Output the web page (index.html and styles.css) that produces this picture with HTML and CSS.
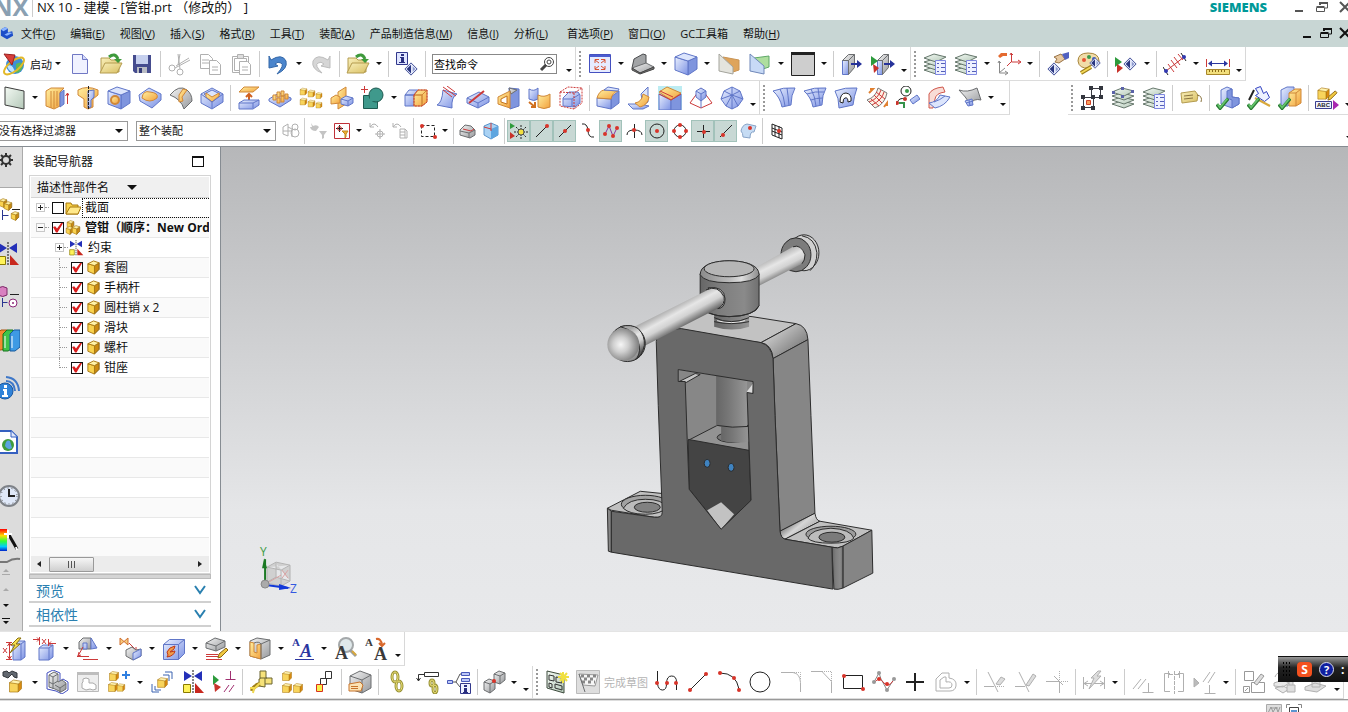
FILE: index.html
```html
<!DOCTYPE html>
<html lang="zh-CN">

<head>
  <meta charset="UTF-8">
  <meta name="viewport" content="width=device-width, initial-scale=1.0">
  <title>NX 10 - 建模</title>
  <link rel="stylesheet" href="styles.css">
</head>

<body>
  <!-- Shared gradients and symbols -->
  <svg class="defs" width="0" height="0" aria-hidden="true">
    <defs>
      <linearGradient id="blue" x1="0" y1="0" x2="1" y2="1"><stop offset="0" stop-color="#eaf0fe"/><stop offset="1" stop-color="#7c92e4"/></linearGradient>
      <linearGradient id="gold" x1="0" y1="0" x2="1" y2="1"><stop offset="0" stop-color="#fff0a0"/><stop offset="1" stop-color="#f2a03c"/></linearGradient>
      <linearGradient id="cream" x1="0" y1="0" x2="1" y2="1"><stop offset="0" stop-color="#f8efba"/><stop offset="1" stop-color="#d9bf62"/></linearGradient>
      <linearGradient id="gray" x1="0" y1="0" x2="1" y2="1"><stop offset="0" stop-color="#f4f4f4"/><stop offset="1" stop-color="#97999c"/></linearGradient>
      <linearGradient id="sheet" x1="0" y1="0" x2="1" y2="1"><stop offset="0" stop-color="#f4faf4"/><stop offset="1" stop-color="#b4c8b8"/></linearGradient>
      <linearGradient id="rainbow" x1="0" y1="0" x2="0" y2="1"><stop offset="0" stop-color="#f00"/><stop offset=".3" stop-color="#fd0"/><stop offset=".55" stop-color="#3f3"/><stop offset=".8" stop-color="#0cf"/><stop offset="1" stop-color="#02c"/></linearGradient>
      <symbol id="cube" viewBox="0 0 24 24"><path fill="#d98a10" stroke="#a8740c" d="M16 9l5-4v11l-5 5z"/><path fill="#f8d45c" stroke="#a8740c" d="M3 7h13v14H3z"/><path fill="#fff3b0" stroke="#a8740c" d="M3 7l6-4 12 2-5 4z"/></symbol>
      <symbol id="part" viewBox="0 0 16 16"><path fill="#c98a12" stroke="#7d5a0c" d="M9 6l5-3v7l-5 5z"/><path fill="#f9d24f" stroke="#a9780f" d="M2 4l7 2v9l-7-3z"/><path fill="#fff2a8" stroke="#a9780f" d="M2 4l6-3 6 2-5 3z"/></symbol>
      <symbol id="bluecube" viewBox="0 0 24 24"><path class="bld" d="M14 9l9-4v12l-9 6z"/><path class="bl" d="M1 5l13 4v14L1 18z"/><path class="blt" d="M1 5l9-4 13 4-9 4z"/></symbol>
      <symbol id="layers" viewBox="0 0 24 24"><g fill="url(#sheet)" stroke="#66776c"><path d="M1 18l10-3 12 3-10 4z"/><path d="M1 14l10-3 12 3-10 4z"/><path d="M1 10l10-3 12 3-10 4z"/><path d="M1 6l10-4 12 3-10 5z"/></g></symbol>
      <symbol id="list" viewBox="0 0 24 24"><path fill="#eef1ff" stroke="#7f88e0" d="M12.500 8.500h10v14h-10z"/><path fill="none" stroke="#5560b8" d="M14 11.500h2m2 0h4m-8 4h2m2 0h4m-8 4h2m2 0h4"/></symbol>
      <symbol id="diamond" viewBox="0 0 16 16"><path fill="#e4e9fa" stroke="#2c3a8c" d="M1 8l7-7 7 7-7 7z"/><path fill="#2a3680" d="M8 3v10L3 8z"/><path fill="#8e9bd0" d="M10 5v6l3-3z"/></symbol>
      <symbol id="folder" viewBox="0 0 24 24"><path class="cr" d="M2 6h8l2 2h8v12H2z"/><path class="cr" d="M1 21l5-10h17l-5 10z"/><path fill="none" stroke="#3f9a3c" stroke-width="3" d="M10 5q6-5 9 2"/><path fill="#3f9a3c" d="M15 7h8l-4 4z"/></symbol>
      <symbol id="tick" viewBox="0 0 16 16"><path fill="none" stroke="#2a7c35" stroke-width="4" d="M1 9l4 5L15 2"/><path fill="none" stroke="#63c46a" stroke-width="2" d="M2 9l3 4 9-11"/></symbol>
      <symbol id="spot" viewBox="0 0 4 4"><circle cx="2" cy="2" r="2" fill="#d8342a"/></symbol>
      <symbol id="pencil" viewBox="0 0 12 12"><path fill="#f0c840" stroke="#8a6410" d="M1 11l1-4 7-6 2 2-7 7z"/></symbol>
      <symbol id="window-restore" viewBox="0 0 12 12"><path fill="none" stroke="currentColor" stroke-width="2" d="M4 4V2h8"/><path fill="none" stroke="currentColor" d="M11.500 2v5H9"/><path fill="none" stroke="currentColor" d="M.5 6.500h8v4h-8zM.5 5.500h8"/></symbol>
      <symbol id="mirror" viewBox="0 0 24 24"><path fill="#2430b8" d="M3 1l8 5-8 5zM21 1l-8 5 8 5z"/><path fill="none" stroke="#111" stroke-dasharray="2 1" d="M12 0v24"/><path fill="#fff35a" stroke="#8a7a00" d="M2.500 14.500h7v8h-7z"/><path fill="#c8281e" d="M14 13v10h9z"/></symbol>
    </defs>
  </svg>

  <header class="titlebar">
    <span class="logo">NX</span>
    <h1 class="title">NX 10 - 建模 - [管钳.prt （修改的） ]</h1>
    <span class="brand">SIEMENS</span>
    <div class="window-buttons">
      <button class="win" aria-label="最小化"><svg viewBox="0 0 12 12"><path class="w2" d="M2 10h8"/></svg></button>
      <button class="win" aria-label="还原"><svg viewBox="0 0 12 12"><use href="#window-restore"/></svg></button>
      <button class="win" aria-label="关闭"><svg viewBox="0 0 12 12"><path class="w2" d="M1 1l10 10M11 1L1 11"/></svg></button>
    </div>
  </header>

  <nav class="menubar">
    <svg class="menu-icon" viewBox="0 0 16 16"><path fill="#1c4ec8" d="M1 4l5-3 3 2v4l5-1 1 5-7 4-7-4z"/><path fill="#8ab4ff" d="M1 4l5-3 3 2-5 3zM5 10l5-3 4 1-6 3z"/></svg>
    <button>文件(<u>F</u>)</button>
    <button>编辑(<u>E</u>)</button>
    <button>视图(<u>V</u>)</button>
    <button>插入(<u>S</u>)</button>
    <button>格式(<u>R</u>)</button>
    <button>工具(<u>T</u>)</button>
    <button>装配(<u>A</u>)</button>
    <button>产品制造信息(<u>M</u>)</button>
    <button>信息(<u>I</u>)</button>
    <button class="wide">分析(<u>L</u>)</button>
    <button>首选项(<u>P</u>)</button>
    <button>窗口(<u>O</u>)</button>
    <button>GC工具箱</button>
    <button>帮助(<u>H</u>)</button>
    <div class="window-buttons dark">
      <button class="win" aria-label="最小化"><svg viewBox="0 0 12 12"><path class="w2" d="M2 10h8"/></svg></button>
      <button class="win" aria-label="还原"><svg viewBox="0 0 12 12"><use href="#window-restore"/></svg></button>
      <button class="win" aria-label="关闭"><svg viewBox="0 0 12 12"><path class="w2" d="M1 1l10 10M11 1L1 11"/></svg></button>
    </div>
  </nav>

  <!-- Standard, view and utility toolbars -->
  <div class="toolbar-row">
    <div class="toolbar first">
      <button class="start"><svg viewBox="0 0 24 24"><circle cx="13" cy="13" r="9" fill="#3d8fd8"/><path fill="#5cb85a" d="M14 12q6-4 7 2-2 7-7 7z"/><path fill="#bfe3ff" d="M5 14q6-3 8 7-6-1-8-7z"/><ellipse cx="12" cy="14" rx="12" ry="5" fill="none" stroke="#e3b92a" stroke-width="2" transform="rotate(-38 12 14)"/><path fill="#d8403a" stroke="#9a2020" d="M2 2l11 1-3 10z"/></svg>启动</button>
      <button class="drop" aria-label="启动选项"></button>
      <button class="tool" aria-label="新建"><svg viewBox="0 0 24 24"><path fill="#f0f2ff" stroke="#7078c4" d="M4.500 2.500h10l5 5v14h-15z"/><path fill="#d4d9fb" stroke="#7078c4" d="M14.500 2.500v5h5"/></svg></button>
      <button class="tool" aria-label="打开"><svg viewBox="0 0 24 24"><use href="#folder"/></svg></button>
      <button class="tool" aria-label="保存"><svg viewBox="0 0 24 24"><path fill="#454c8e" d="M3 3h18v18H5l-2-2z"/><path fill="#c6d0ee" d="M6 3h12v9H6z"/><path fill="#b9bcc4" d="M7 15h10v6H7z"/><path fill="#343b78" d="M9 16h3v5H9z"/></svg></button>
      <span class="sep"></span>
      <button class="tool" aria-label="剪切"><svg class="off" viewBox="0 0 24 24"><path d="M11 2l2 15M13 2l-2 11M23 8L8 16M22 6L9 14"/><circle cx="5" cy="16" r="3"/><circle cx="13" cy="20" r="3"/></svg></button>
      <button class="tool" aria-label="复制"><svg class="off" viewBox="0 0 24 24"><path d="M2.500 2.500h8l4 4v10h-12zM4 8h7m-7 3h7"/><path fill="#fff" d="M11.500 8.500h7l4 4v10h-11zM14 15h6m-6 3h6"/></svg></button>
      <button class="tool" aria-label="粘贴"><svg class="off" viewBox="0 0 24 24"><path d="M3.500 4.500h16v16h-16zM5.500 6.500h12v12h-12z"/><path fill="#ddd" d="M8.500 2.500h6v4h-6z"/><path fill="#fff" d="M10.500 9.500h8l3 3v10h-11zM13 15h6m-6 3h6"/></svg></button>
      <span class="sep"></span>
      <button class="tool" aria-label="撤消"><svg viewBox="0 0 24 24"><path fill="#4b85cc" stroke="#3568a8" d="M3 4l2 4q11-7 15 1 2 8-9 13 8-9 4-11-3-2-6 1l3 2-9 2z"/></svg></button>
      <button class="drop" aria-label="撤消列表"></button>
      <button class="tool" aria-label="重做"><svg viewBox="0 0 24 24"><path fill="#d6d6d6" stroke="#bdbdbd" d="M21 4l-2 4Q8 1 4 9q-2 8 9 12-8-8-4-10 3-2 6 1l-3 2 9 2z"/></svg></button>
      <span class="sep"></span>
      <button class="tool" aria-label="最近打开"><svg viewBox="0 0 24 24"><use href="#folder"/></svg></button>
      <button class="drop" aria-label="最近打开列表"></button>
      <span class="sep"></span>
      <button class="tool" aria-label="命令信息"><svg viewBox="0 0 24 24"><path fill="#dfe5ff" stroke="#32388c" d="M1.500.5h11v12h-11z"/><path fill="#2a2f80" d="M6 2h3v2H6zM5 5h4v5h1v1H4v-1h2V6H5z"/><use href="#diamond" x="9" y="10" width="14" height="14"/></svg></button>
      <span class="sep"></span>
      <label class="finder"><input type="text" value="查找命令" aria-label="查找命令"><svg viewBox="0 0 16 16"><circle cx="10" cy="6" r="4.500"/><circle cx="10" cy="6" r="2"/><path d="M7 9l-5 5" stroke-width="3"/></svg></label>
      <button class="drop more" aria-label="更多"></button>
    </div>
    <div class="toolbar">
      <span class="grip"></span>
      <button class="tool" aria-label="适合窗口"><svg viewBox="0 0 24 24"><path fill="#e6ebff" stroke="#4450c0" d="M1.500 2.500h21v18h-21z"/><path fill="#4b5cd0" d="M2 3h20v2H2z"/><path fill="none" stroke="#d85232" d="M7 11V7.500h4M7 8l4 3m2-3.500h4V11m0-3l-4 3m-6 3v3.500h4M7 17l4-3m2 3.500h4V14m0 3l-4-3"/></svg></button>
      <button class="drop" aria-label="视图选项"></button>
      <button class="tool" aria-label="渲染样式"><svg viewBox="0 0 24 24"><path fill="#a2a4a6" stroke="#4a4c4e" d="M1 16l2-9 9-5 3 1v9L4 17z"/><path class="gy" d="M1 16l14-5 8 4-14 6z"/><path fill="#777" stroke="#444" d="M1 16l8 5 14-6v2L9 22l-8-4z"/></svg></button>
      <button class="drop" aria-label="渲染选项"></button>
      <button class="tool" aria-label="定向视图"><svg viewBox="0 0 24 24"><use href="#bluecube"/></svg></button>
      <button class="drop" aria-label="定向选项"></button>
      <button class="tool" aria-label="编辑截面"><svg viewBox="0 0 24 24"><path fill="#dea45c" stroke="#c99454" d="M6 5l16 3v10l-9 3z"/><path fill="#e4e4de" stroke="#a4a49c" d="M2 2l14 13v7L2 19z"/></svg></button>
      <button class="tool" aria-label="剪切截面"><svg viewBox="0 0 24 24"><path fill="#aede9e" stroke="#5fa868" d="M6 6l15-2v11l-9 3z"/><path fill="#c8daf6" stroke="#6f87b8" d="M2 2l14 12v8L2 19z"/></svg></button>
      <button class="drop" aria-label="截面选项"></button>
      <button class="tool" aria-label="背景"><svg viewBox="0 0 24 24"><path fill="#cecece" stroke="#222" d="M.5.5h23v23H.5z"/><path fill="#222" d="M0 0h24v3H0z"/></svg></button>
      <button class="drop" aria-label="背景选项"></button>
      <span class="sep"></span>
      <button class="tool" aria-label="移动面"><svg viewBox="0 0 24 24"><path class="bl" d="M2.500 8.500h6v14h-6z"/><path class="gy" d="M2.500 8.500l6-6h6l-6 6zM8.500 8.500l6-6v13l-6 7z"/><path fill="none" stroke="#26329a" stroke-width="2" d="M11 12h9"/><path fill="#26329a" d="M17 8l5 4-5 4z"/></svg></button>
      <button class="tool" aria-label="替换面"><svg viewBox="0 0 24 24"><path class="bl" d="M6.500 8.500h5v14h-5z"/><path class="gy" d="M6.500 8.500l6-6h5l-6 6zM11.500 8.500l6-6v13l-6 7z"/><path fill="none" stroke="#26329a" stroke-width="2" d="M13 12h8"/><path fill="#26329a" d="M19 8l5 4-5 4z"/><path fill="#2d9b3c" d="M0 4l7 5-7 5z"/><path fill="#c8322a" d="M2 12l6 4-5 5z"/></svg></button>
      <button class="drop more" aria-label="更多"></button>
    </div>
    <div class="toolbar">
      <span class="grip"></span>
      <button class="tool" aria-label="图层设置"><svg viewBox="0 0 24 24"><use href="#layers"/><use href="#list"/></svg></button>
      <button class="tool" aria-label="图层类别"><svg viewBox="0 0 24 24"><use href="#layers"/><use href="#list"/></svg></button>
      <button class="drop" aria-label="图层选项"></button>
      <button class="tool" aria-label="WCS 定向"><svg viewBox="0 0 24 24"><path class="rd" d="M14.500 1v9h9M14 10l-4 4m3-11l1-2 2 2m5 5l3 2-3 2"/><path fill="none" stroke="#888" d="M2.500 9v12h8M2 21l6-5M1 11l1-2 2 2m4 8l3 2-3 2"/><path fill="#e46a30" d="M1 4l3-3h6v3H6L3 6z"/></svg></button>
      <button class="drop" aria-label="WCS 选项"></button>
      <span class="sep"></span>
      <button class="tool" aria-label="显示命令"><svg viewBox="0 0 24 24"><use href="#diamond" x="1" y="10" width="14" height="14"/><path fill="#e8c9a0" stroke="#9a7448" d="M8 5l7-3 4 5-6 4-4-1 2-3z"/><path fill="#5160c0" d="M16 2l7-2v6l-4 2z"/></svg></button>
      <button class="tool" aria-label="编辑对象显示"><svg viewBox="0 0 24 24"><path fill="#f0dca8" stroke="#a8853c" d="M1 9Q1 1 11 1q11 0 11 8 0 6-6 4-4 0-4 3-10 1-11-7z"/><circle cx="7" cy="8" r="2" fill="#e65434"/><circle cx="12" cy="5" r="2" fill="#3c9a4a"/><circle cx="17" cy="7" r="2" fill="#3b5fc8"/><use href="#diamond" x="12" y="5" width="12" height="12"/><path fill="none" stroke="#9a7a18" stroke-width="4" d="M4 21l10-6"/><path fill="none" stroke="#f3d957" stroke-width="2" d="M4 21l10-6"/></svg></button>
      <span class="sep"></span>
      <button class="tool" aria-label="显示和隐藏"><svg viewBox="0 0 24 24"><path fill="#2d9b3c" d="M1 5l7 5-7 5z"/><path fill="#c8322a" d="M3 12l6 4-6 5z"/><use href="#diamond" x="9" y="5" width="14" height="14"/></svg></button>
      <button class="drop" aria-label="显示选项"></button>
      <span class="sep"></span>
      <button class="tool" aria-label="简单距离"><svg viewBox="0 0 24 24"><path class="rd" d="M5 12l6 8m-3-12l6 8m-3-11l6 8m-2-11l5 6"/><path fill="none" stroke="#c53030" d="M3 19L21 5"/><path class="ln" d="M0 15l5 8M18 1l5 8"/><circle cx="3" cy="19" r="2" fill="#3038b0"/><circle cx="21" cy="5" r="2" fill="#3038b0"/></svg></button>
      <button class="drop" aria-label="测量选项"></button>
      <button class="tool" aria-label="测量距离"><svg viewBox="0 0 24 24"><path fill="none" stroke="#2a36a0" d="M3 11.500h18"/><path fill="#2a36a0" d="M2 11.500l4-3v6zM22 11.500l-4-3v6z"/><path class="rd" d="M.5 7v8M23.500 7v8"/><path fill="#f2df7c" stroke="#a8862a" d="M.5 17.500h23v5H.5z"/><path fill="none" stroke="#8b6c18" d="M3.500 18v2m3-2v2m3-2v2m3-2v2m3-2v2m3-2v2"/></svg></button>
      <button class="drop more" aria-label="更多"></button>
    </div>
  </div>

  <!-- Feature, surface and assembly toolbars -->
  <div class="toolbar-row">
    <div class="toolbar first">
      <button class="tool" aria-label="草图"><svg viewBox="0 0 24 24"><path fill="url(#sheet)" stroke="#3c3c3c" d="M3 1l19 4v18L3 19z"/></svg></button>
      <button class="drop" aria-label="草图选项"></button>
      <button class="tool" aria-label="拉伸"><svg viewBox="0 0 24 24"><path class="or" d="M1 5l5-3h13l-4 4v14l-6 3-8-3z"/><path class="lo" d="M6 5v17m3-17v17m3-17v15"/><path class="bld" d="M15 7l4-3v14l-4 3z"/><path class="rd" d="M22.500 18V7m-2 3l2-3 2 3"/></svg></button>
      <button class="tool" aria-label="旋转"><svg viewBox="0 0 24 24"><path class="or" d="M2 4q9-5 20 0v5l-5 4v8l-5 2-4-2v-8L2 9z"/><path class="bl" d="M12 5l6-1v7l-3 3v7l-3 1z"/><path class="ln" stroke-dasharray="3 1" d="M12.500 0v24"/></svg></button>
      <button class="tool" aria-label="孔"><svg viewBox="0 0 24 24"><use href="#bluecube"/><circle cx="8" cy="14" r="4" class="or" stroke-width="2"/></svg></button>
      <button class="tool" aria-label="凸起"><svg viewBox="0 0 24 24"><path class="bl" d="M1 9l10-7 12 6v6l-9 8L2 15z"/><path class="or" d="M4 12q1-8 8-6 9 1 7 6-7 6-15 0z"/></svg></button>
      <button class="tool" aria-label="槽"><svg viewBox="0 0 24 24"><path class="gy" d="M1 9Q10-2 18 4q5 4 5 11l-8 8Q12 13 1 9z"/><path class="or" d="M10 9l4-6 4 1-5 7 1 4-4 1z"/></svg></button>
      <button class="tool" aria-label="腔"><svg viewBox="0 0 24 24"><path class="bl" d="M1 8l11-6 11 6v8l-11 7-11-6z"/><path class="blt" d="M4 8l8-4 8 4-8 6z"/><path class="or" d="M6 7l6 4 7-4v3l-7 6-6-5z"/><path class="lb" d="M1 8l11 8 11-8m-11 8v6"/></svg></button>
      <span class="sep"></span>
      <button class="tool" aria-label="偏置面"><svg viewBox="0 0 24 24"><path class="or" d="M2 6l5-5h15l-6 5z"/><path fill="none" stroke="#d06020" stroke-width="2" d="M12 15V9m-3 2l3-3 3 3"/><path class="bl" d="M2 17l5-3h15v5l-6 4H2z"/><path class="lb" d="M2 17h14l6-3m-6 3v5"/></svg></button>
      <button class="tool" aria-label="阵列面"><svg viewBox="0 0 24 24"><path class="bl" d="M1 13l10-6 12 5v2l-11 7L1 15z"/><g class="or"><path d="M5 9h3v5H5zM9 6h3v5H9zM13 5h3v5h-3zM9 12h3v5H9zM13 10h3v6h-3zM17 8h3v5h-3z"/></g></svg></button>
      <button class="tool" aria-label="阵列特征"><svg viewBox="0 0 24 24"><use href="#cube" x="0" y="0" width="9" height="11"/><use href="#cube" x="8" y="2" width="9" height="11"/><use href="#cube" x="16" y="4" width="8" height="11"/><use href="#cube" x="0" y="10" width="9" height="11"/><use href="#cube" x="8" y="12" width="9" height="11"/><use href="#cube" x="16" y="14" width="8" height="10"/></svg></button>
      <button class="tool" aria-label="镜像特征"><svg viewBox="0 0 24 24"><path class="or" d="M8 6l8-5v17l-8 5z"/><path class="or" d="M1 12l5-3 4 2v6l-9 1z"/><path class="bl" d="M11 13l5-3 7 2v5l-5 3-7-2z"/><path class="lb" d="M11 13l7 2 5-3m-5 3v5"/></svg></button>
      <button class="tool" aria-label="合并"><svg viewBox="0 0 24 24"><path class="tl" d="M2.500 9.500h14v13h-14z"/><circle class="tl" cx="15" cy="9" r="7"/><path fill="#3f998c" d="M9 10h7v5H9z"/><path class="rd" d="M0 3.500h7M3.500 0v7"/></svg></button>
      <button class="drop" aria-label="合并选项"></button>
      <button class="tool" aria-label="修剪体"><svg viewBox="0 0 24 24"><path class="bl" d="M1 9h9v11H1zM1 9l4-5h9l-4 5z"/><path class="or" d="M10 9h8v11h-8zM10 9l4-5h9l-5 5zM18 9l5-5v12l-5 4z"/><path class="rd" stroke-dasharray="2 1" d="M10 9l4-5h9v12l-5 4h-8z"/></svg></button>
      <button class="tool" aria-label="拆分体"><svg viewBox="0 0 24 24"><path class="bl" d="M8 4l14 4q-6 3-5 14L2 19q5-2 6-15z"/><path class="rd" d="M8 1l13 9M12 0l8 6M8 4l9 7"/></svg></button>
      <button class="tool" aria-label="抽壳"><svg viewBox="0 0 24 24"><path class="bl" d="M1 12l12-6 10 5v5l-11 6-11-5z"/><path class="lb" d="M1 12l11 5 11-6m-11 6v5"/><path class="rd" stroke-width="2" d="M3 17L18 5"/></svg></button>
      <button class="tool" aria-label="加厚"><svg viewBox="0 0 24 24"><path class="bld" d="M12 2l10 1v17l-9 3z"/><path class="gy" d="M12 2l8 2-6 4z"/><path class="or" d="M1 11l12-6v17L1 18z"/><path fill="#fff" stroke="#c4731e" d="M4 13l6-3v8l-6-2z"/></svg></button>
      <button class="tool" aria-label="缝合"><svg viewBox="0 0 24 24"><path class="bl" d="M1 3q5 3 9-1v11q-4 3-9 0z"/><path class="or" d="M10 9q6 3 12-1v13q-6 3-12 0z"/><path fill="none" stroke="#d07020" stroke-width="2" d="M1 16l6 5m0-5v5H3"/></svg></button>
      <button class="tool" aria-label="包容体"><svg viewBox="0 0 24 24"><path class="bl" d="M4 20v-8l6-6h9l2 3v8l-5 4z"/><path class="lb" d="M4 13h9l8-5m-8 5v7"/><path class="rd" stroke-dasharray="2 1" d="M1 6l8-5 14 1v15l-8 6-14-3zM1 6l14 1 8-5m-8 5v16"/></svg></button>
      <span class="sep"></span>
      <button class="tool" aria-label="边倒圆"><svg viewBox="0 0 24 24"><path class="bld" d="M15 11l8-6v12l-8 6z"/><path class="bl" d="M1 12l14 1v10L1 20z"/><path class="or" d="M1 12q2-7 7-8l14 1q-6 2-7 8z"/><path class="blt" d="M8 4l4-3 11 2-1 2z"/></svg></button>
      <button class="tool" aria-label="面倒圆"><svg viewBox="0 0 24 24"><path class="bl" d="M1 18h12l9 2-6 3H6z"/><path class="blt" d="M14 8l7-7v15l-5 3z"/><path class="or" d="M8 17q7-1 8-9l6 3q-1 8-9 10z"/></svg></button>
      <button class="tool" aria-label="倒斜角"><svg viewBox="0 0 24 24"><path fill="#bcecf2" d="M0 0h24v24H0z"/><path class="bl" d="M1 8l12 6v10H1z"/><path class="bld" d="M13 14l10-6v16H13z"/><path class="or" d="M1 6l8-5 14 6-10 7z"/><path class="rd" d="M1 8l12 6 10-6M2 5l13 6"/></svg></button>
      <button class="tool" aria-label="拔模"><svg viewBox="0 0 24 24"><path class="rd" d="M1 17L12 2l11 15-11 5z"/><path class="bl" d="M7 5l5-3 5 3v6l-5 4-5-4z"/><path class="lb" d="M7 5l5 3 5-3m-5 3v14"/></svg></button>
      <button class="tool" aria-label="体"><svg viewBox="0 0 24 24"><path class="bl" d="M12 1l8 4 3 8-5 7-6 3-6-3-5-7 3-8z"/><path class="lb" d="M4 5l8 4 8-4M1 13l11-4 11 4M6 20l6-11 6 11M12 1v22"/></svg></button>
      <button class="drop more" aria-label="更多"></button>
    </div>
    <div class="toolbar">
      <span class="grip"></span>
      <button class="tool" aria-label="直纹"><svg viewBox="0 0 24 24"><path class="bl" d="M1 5q10-4 22-3-4 7-4 17l-9 2Q8 11 1 5z"/><path class="lb" d="M8 3q4 7 5 17m2-18q1 7 2 17"/></svg></button>
      <button class="tool" aria-label="通过曲线网格"><svg viewBox="0 0 24 24"><path class="bl" d="M1 5q10-4 22-3-4 7-4 17l-9 2Q8 11 1 5z"/><path class="lb" d="M8 3q4 7 5 17m2-18q1 7 2 17M4 8q8-3 17-2M8 14q5-2 12-2"/></svg></button>
      <button class="tool" aria-label="N 边曲面"><svg viewBox="0 0 24 24"><path class="bl" d="M1 5q10-4 22-3-3 8-4 17l-14 3Q5 12 1 5z"/><path fill="#fff" stroke="#222" d="M6 16q0-9 6-9 6 1 5 8l-3 1q0-5-3-4-2 0-2 5z"/></svg></button>
      <button class="tool" aria-label="扫掠"><svg viewBox="0 0 24 24"><path fill="#fdf0e4" stroke="#7c7c7c" d="M2 14Q11 11 13 2l9 5Q20 18 10 22z"/><path class="rd" d="M4 16q9-3 12-12M7 19q10-5 12-13M6 13l8 7M9 9l8 8M11 6l9 7"/><path fill="none" stroke="#e08030" stroke-width="2" d="M4 7l4-4H5m14 18l3-4v3"/></svg></button>
      <button class="tool" aria-label="曲线偏置"><svg viewBox="0 0 24 24"><circle class="ln" cx="10" cy="5" r="5"/><path class="ln" d="M1 17q2-6 8-4"/><circle cx="11" cy="5" r="2" fill="#3a9a48"/><circle cx="1" cy="17" r="2" fill="#c8322a"/><circle cx="9" cy="13" r="2" fill="#c8322a"/><path class="bl" d="M14 14l7-5 3 4-7 5z"/><path fill="none" stroke="#36914a" stroke-width="2" d="M8 22v-5H3"/></svg></button>
      <button class="tool" aria-label="桥接"><svg viewBox="0 0 24 24"><path fill="#f8dcd6" stroke="#d0584c" d="M2 8q3-6 14-7l2 5Q9 7 8 13L6 22H2z"/><path class="blt" d="M2 17q8-1 11-8l10 2q-5 9-15 11z"/><path class="lb" d="M7 16q6-2 11-6"/></svg></button>
      <button class="tool" aria-label="片体"><svg viewBox="0 0 24 24"><path class="gy" d="M1 4q8 3 18-2l4 12q-7-2-11 4Q8 11 1 4z"/><path class="bl" d="M7 15l7-2 1 6-5 1z"/><path class="lb" d="M8 17l7-2m-4-1l1 6"/></svg></button>
      <button class="drop" aria-label="曲面选项"></button>
      <button class="drop more" aria-label="更多"></button>
    </div>
    <div class="toolbar aside">
      <span class="grip"></span>
      <button class="tool" aria-label="包容块"><svg viewBox="0 0 24 24"><path fill="none" stroke="#3c3c44" d="M11.500 2.500h9v9h-9zM3.500 11.500h10v10h-10z"/><path fill="#33363e" d="M9 0h4v4H9zM19 0h4v4h-4zM19 9h4v4h-4zM1 9h4v4H1zM11 9h4v4h-4zM1 20h4v4H1zM11 20h4v4h-4z"/><path fill="#f8a05c" stroke="#d04228" d="M6.500 14.500h4v4h-4z"/></svg></button>
      <button class="tool" aria-label="移动至图层"><svg viewBox="0 0 24 24"><use href="#layers"/><path fill="#5a62a8" d="M1 5h3v3H1zM20 4h3v3h-3zM10 1h3v3h-3zM10 9h3v3h-3z"/></svg></button>
      <button class="tool" aria-label="图层视图"><svg viewBox="0 0 24 24"><use href="#layers"/><use href="#list"/></svg></button>
      <span class="sep"></span>
      <button class="tool" aria-label="属性"><svg viewBox="0 0 24 24"><path class="cr" d="M2 7l14-2 3 4-1 6-15 2z"/><path fill="none" stroke="#8a7440" d="M5 10l9-1m-9 4l9-1m4-3q6 1 4 7"/></svg></button>
      <span class="sep"></span>
      <button class="tool" aria-label="检查部件"><svg viewBox="0 0 24 24"><path class="bl" d="M5 4l6-3 5 2v8l7 1v6l-7 4-11-4z"/><path class="bld" d="M11 5l5-2v8l7 1v6l-7 4v-8l-5-2z"/><use href="#tick" x="0" y="11" width="13" height="13"/></svg></button>
      <button class="tool" aria-label="检查草图"><svg viewBox="0 0 24 24"><path fill="#eef2ff" stroke="#3040c0" d="M8.500 2.500l5-2 3 7 3-2 3 6-5 4-9-6 3-2z"/><path fill="none" stroke="#222" stroke-width="2" d="M7 4L2 14"/><path fill="none" stroke="#d8a83c" stroke-width="2" d="M8 12l15 8"/><use href="#tick" x="0" y="11" width="13" height="13"/></svg></button>
      <button class="tool" aria-label="检查装配"><svg viewBox="0 0 24 24"><path class="bl" d="M3 4l6-3h7v12l-6 7H3z"/><path class="or" d="M11 7l6-4h6v14l-5 3h-7z"/><path class="lo" d="M11 7h7l5-4m-5 4v13"/><use href="#tick" x="0" y="11" width="13" height="13"/></svg></button>
      <span class="sep"></span>
      <button class="tool" aria-label="PMI 注释"><svg viewBox="0 0 24 24"><use href="#cube" x="1" y="0" width="15" height="15"/><use href="#pencil" x="12" y="4" width="11" height="11"/><path fill="#eef1ff" stroke="#3a3f90" d="M.5 15.500h16v7H.5z"/><text class="abc" x="2" y="21">ABC</text><path fill="#a828b0" d="M18 14l6 5-6 5z"/></svg></button>
      <button class="drop more" aria-label="更多"></button>
    </div>
  </div>

  <!-- Selection bar -->
  <div class="selection-bar">
    <label class="combo"><select aria-label="类型过滤器"><option>没有选择过滤器</option></select></label>
    <label class="combo scope"><select aria-label="选择范围"><option>整个装配</option></select></label>
    <button class="mini" aria-label="关联"><svg class="off" viewBox="0 0 18 18"><path d="M1 5l5-3v12l-5-2zM6 5l4 2v8M1 9h9"/><circle cx="13" cy="5" r="3"/><circle cx="13" cy="11" r="4"/></svg></button>
    <span class="sep"></span>
    <button class="mini" aria-label="重置过滤器"><svg viewBox="0 0 18 18"><path fill="#c4c4c4" d="M9 9h8l-3 4v3l-2 1v-4z"/><path fill="#c4c4c4" d="M1 1l2 3q4-2 6 1l-3 4q-5 0-6-4l2 0z"/></svg></button>
    <button class="mini" aria-label="常规选择过滤器"><svg viewBox="0 0 18 18"><path fill="#fff" stroke="#c03038" d="M1.500 1.500h15v15h-15z"/><path class="ln" d="M6.500 3v7M3 6.500h7"/><circle class="rd" cx="6.500" cy="6.500" r="2"/><path fill="#f0b030" stroke="#c08820" d="M9 9h6l-2 3v3l-1 1v-4z"/></svg></button>
    <button class="drop" aria-label="过滤选项"></button>
    <button class="mini" aria-label="取消选择"><svg class="off" viewBox="0 0 18 18"><path d="M2 5q4-6 8 0M2 1v4h4M7 12h10M12 7v10"/><circle cx="12" cy="12" r="3"/></svg></button>
    <button class="mini" aria-label="查找"><svg class="off" viewBox="0 0 18 18"><path d="M2 5q4-6 8 0M2 1v4h4M9 7h5v9H9zm5 0l2 2v7h-2M9 10h5m-5 3h5"/></svg></button>
    <span class="sep"></span>
    <button class="mini" aria-label="矩形选择"><svg viewBox="0 0 18 18"><path class="ln" stroke-dasharray="3 2" d="M2.500 3.500h13v11h-13z"/><use href="#spot" x="1" y="2" width="4" height="4"/><use href="#spot" x="14" y="13" width="4" height="4"/></svg></button>
    <button class="drop" aria-label="选择选项"></button>
    <span class="sep"></span>
    <button class="mini" aria-label="高亮隐藏边"><svg viewBox="0 0 18 18"><path class="gy" d="M1 13V8l5-5 6 1 4 4v5l-5 3z"/><path class="gl" d="M1 9l9 2 6-3m-6 3v5"/><path class="rd" d="M4 7l8 2 3-2"/></svg></button>
    <button class="mini" aria-label="实体"><svg viewBox="0 0 18 18"><path fill="#a9d2f4" stroke="#5a94cc" d="M2 4l7-3 7 3v9l-7 4-7-4z"/><path fill="#5fa6e0" d="M9 7l7-3v9l-7 4z"/><path class="rd" d="M2 5l7 2M9 1v8"/></svg></button>
    <span class="sep"></span>
    <button class="mini on" aria-label="启用捕捉点"><svg viewBox="0 0 18 18"><path fill="#2d9b3c" d="M0 1l5 3-5 3z"/><path fill="#c8322a" d="M0 10l5 4-5 3z"/><path class="ln" stroke-dasharray="2 1" d="M11 3v14M4 10h14M6 5l10 10M16 5L6 15"/><circle cx="11" cy="10" r="3" fill="#f2e040" stroke="#555"/></svg></button>
    <button class="mini on" aria-label="端点"><svg viewBox="0 0 18 18"><path class="ln" d="M3 15L14 4"/><use href="#spot" x="12" y="2" width="4" height="4"/></svg></button>
    <button class="mini on" aria-label="中点"><svg viewBox="0 0 18 18"><path class="ln" d="M3 15L15 3"/><use href="#spot" x="7" y="7" width="4" height="4"/></svg></button>
    <button class="mini" aria-label="控制点"><svg viewBox="0 0 18 18"><path class="ln" d="M3 2q5-1 6 6 0 8 6 7"/><use href="#spot" x="7" y="6" width="4" height="4"/></svg></button>
    <button class="mini on" aria-label="极点"><svg viewBox="0 0 18 18"><path fill="none" stroke="#8c2f9c" d="M3 12l4-8 4 10 4-8"/><use href="#spot" x="1" y="10" width="4" height="4"/><use href="#spot" x="5" y="2" width="4" height="4"/><use href="#spot" x="9" y="12" width="4" height="4"/><use href="#spot" x="13" y="4" width="4" height="4"/></svg></button>
    <button class="mini" aria-label="交点"><svg viewBox="0 0 18 18"><path class="ln" d="M9.500 2v14M2 13q0-5 7-5 8 0 8 5"/><use href="#spot" x="7" y="6" width="4" height="4"/></svg></button>
    <button class="mini on" aria-label="圆弧中心"><svg viewBox="0 0 18 18"><circle class="ln" cx="9" cy="9" r="7"/><use href="#spot" x="7" y="7" width="4" height="4"/></svg></button>
    <button class="mini" aria-label="象限点"><svg viewBox="0 0 18 18"><circle class="ln" cx="9" cy="9" r="6"/><use href="#spot" x="7" y="1" width="4" height="4"/><use href="#spot" x="1" y="7" width="4" height="4"/><use href="#spot" x="13" y="7" width="4" height="4"/><use href="#spot" x="7" y="13" width="4" height="4"/></svg></button>
    <button class="mini on" aria-label="现有点"><svg viewBox="0 0 18 18"><path class="ln" d="M9.500 3v13M3 9.500h13"/><use href="#spot" x="8" y="8" width="4" height="4"/></svg></button>
    <button class="mini on" aria-label="曲线上的点"><svg viewBox="0 0 18 18"><path class="ln" d="M3 15L15 3"/><use href="#spot" x="4" y="11" width="4" height="4"/></svg></button>
    <button class="mini" aria-label="面上的点"><svg viewBox="0 0 18 18"><path fill="#c6dcf4" stroke="#88a4c8" d="M1 9q1-6 6-7l9 2-2 6q-4-1-4 6l-7-1q0-4-2-6z"/><use href="#spot" x="8" y="4" width="4" height="4"/></svg></button>
    <span class="sep"></span>
    <button class="mini" aria-label="有界栅格"><svg viewBox="0 0 18 18"><path class="ln" d="M4 2l10 4v11L4 13zM7 3v11m4-10v12M4 6l10 4M4 9l10 4"/><use href="#spot" x="9" y="7" width="4" height="4"/></svg></button>
    <button class="drop more last" aria-label="更多"></button>
  </div>

  <main class="workspace">
    <!-- Resource bar tabs -->
    <aside class="resource-bar">
      <button class="tab gear" aria-label="设置"><svg viewBox="0 0 24 24"><circle cx="10" cy="12" r="4" fill="none" stroke="#333" stroke-width="2"/><path fill="none" stroke="#333" stroke-width="2" d="M10 5v3m0 8v3M3 12h3m8 0h3M5 7l2 2m6 6l2 2m0-10l-2 2M5 17l2-2"/></svg></button>
      <button class="tab active" aria-label="装配导航器"><svg viewBox="0 0 24 24"><use href="#part" x="2" y="0" width="10" height="10"/><use href="#part" x="7" y="3" width="10" height="10"/><use href="#part" x="14" y="13" width="10" height="10"/><path fill="none" stroke="#2a3690" d="M6.500 12v10m0-4.500h6"/><path class="ln" d="M16 11.500h8"/></svg></button>
      <button class="tab" aria-label="约束导航器"><svg viewBox="0 0 24 24"><use href="#mirror"/></svg></button>
      <button class="tab" aria-label="部件导航器"><svg viewBox="0 0 24 24"><path fill="#d880c0" stroke="#7c2868" d="M2 3q5-3 9 0v7q-4 3-9 0z"/><path fill="none" stroke="#2a3690" d="M6.500 13v9m0-4.500h5"/><circle cx="17" cy="18" r="4" fill="#fff" stroke="#8c2878"/><circle cx="17" cy="18" r="1" fill="#8c2878"/><path class="ln" d="M14 9.500h9"/></svg></button>
      <button class="tab" aria-label="重用库"><svg viewBox="0 0 24 24"><path fill="#f48a30" stroke="#a85410" d="M1 6l4-4h6v18l-6 2H1z"/><path fill="#3fc44a" stroke="#18741c" d="M7 6l4-4h6v18l-5 3H7z"/><path fill="#3e9ae4" stroke="#185a9c" d="M14 6l4-4h6v17l-5 4h-5z"/><path fill="none" stroke="#fff" d="M3 8v12m6-12v12m7-12v12"/></svg></button>
      <button class="tab web" aria-label="HD3D 工具"><svg viewBox="0 0 24 24"><circle cx="9" cy="15" r="8" fill="#2f82d8" stroke="#1a57a0"/><path fill="#fff" d="M8 9h3v3H8zM7 13h4v6h1v2H6v-2h2v-4H7z"/><path fill="none" stroke="#3f78c8" stroke-width="2" d="M10 5q8 0 9 10M10 1q12 1 13 14"/></svg></button>
      <button class="tab web" aria-label="Web 浏览器"><svg viewBox="0 0 24 24"><path fill="#fff" stroke="#3560c0" stroke-width="2" d="M2 1h13l6 6v16H2z"/><path fill="#dfe7fb" stroke="#3560c0" d="M15 1v6h6"/><circle cx="12" cy="15" r="6" fill="#3f9c3c"/><path fill="#5aa2e0" d="M9 16q1-7 5-5l2 7q-4 3-7-2z"/></svg></button>
      <button class="tab web" aria-label="历史记录"><svg viewBox="0 0 24 24"><circle cx="13" cy="12" r="10" fill="#dfe8f8" stroke="#7e8288" stroke-width="2"/><path class="ln" stroke-width="2" d="M13 5v7h6"/><circle cx="13" cy="12" r="8" fill="none" stroke="#555" stroke-dasharray="1 3"/></svg></button>
      <button class="tab role" aria-label="角色"><svg viewBox="0 0 24 24"><path fill="url(#rainbow)" d="M0 1h11v22H0z"/><path fill="none" stroke="#111" stroke-width="3" d="M13 7l8 14"/><path fill="none" stroke="#fff" stroke-width="2" d="M12 2v8m-4-4h8M20 19l1 3"/></svg></button>
      <svg class="squiggle" viewBox="0 0 22 8"><path fill="none" stroke="#777" stroke-width="2" d="M0 5h7q6-4 13-3"/></svg>
      <button class="scroll" aria-label="首页"><svg viewBox="0 0 12 12"><path fill="#aaa" d="M3 5l3-3 3 3zM2 7h8v1H2z"/></svg></button>
      <button class="scroll" aria-label="向上"><svg viewBox="0 0 12 12"><path fill="#aaa" d="M3 8l3-3 3 3z"/></svg></button>
      <button class="scroll" aria-label="向下"><svg viewBox="0 0 12 12"><path fill="#111" d="M3 5l3 3 3-3z"/></svg></button>
      <button class="scroll" aria-label="末页"><svg viewBox="0 0 12 12"><path fill="#111" d="M2 3h8v1H2zM3 6l3 3 3-3z"/></svg></button>
    </aside>

    <!-- Assembly navigator -->
    <section class="navigator">
      <div class="nav-head">
        <h2>装配导航器</h2>
        <button class="maximize" aria-label="最大化"></button>
      </div>
      <div class="tree-frame">
        <button class="column-head">描述性部件名<span class="sort"></span></button>
        <ul class="tree">
          <li><span class="toggle plus"></span><span class="dots"></span><input type="checkbox" id="n1"><svg class="node folder" viewBox="0 0 16 16"><path fill="#f8d24a" stroke="#a8780c" d="M1 3h5l1 2h6v9H1z"/><path fill="#ffe88a" stroke="#a8780c" d="M1 14l4-7h11l-3 7z"/></svg><label class="focused" for="n1">截面</label></li>
          <li><span class="toggle minus"></span><span class="dots"></span><input type="checkbox" id="n2" checked><svg class="node" viewBox="0 0 16 16"><use href="#part" x="1" y="0" width="9" height="9"/><use href="#part" x="0" y="6" width="9" height="9"/><use href="#part" x="6" y="5" width="10" height="10"/></svg><label class="bold" for="n2">管钳（顺序：New Ord</label></li>
          <li class="child"><span class="toggle plus"></span><span class="dots"></span><svg class="node" viewBox="0 0 24 24"><use href="#mirror"/></svg><span>约束</span></li>
          <li class="leaf"><span class="elbow"></span><input type="checkbox" id="n4" checked><svg class="node" viewBox="0 0 16 16"><use href="#part"/></svg><label for="n4">套圈</label></li>
          <li class="leaf"><span class="elbow"></span><input type="checkbox" id="n5" checked><svg class="node" viewBox="0 0 16 16"><use href="#part"/></svg><label for="n5">手柄杆</label></li>
          <li class="leaf"><span class="elbow"></span><input type="checkbox" id="n6" checked><svg class="node" viewBox="0 0 16 16"><use href="#part"/></svg><label for="n6">圆柱销 x 2</label></li>
          <li class="leaf"><span class="elbow"></span><input type="checkbox" id="n7" checked><svg class="node" viewBox="0 0 16 16"><use href="#part"/></svg><label for="n7">滑块</label></li>
          <li class="leaf"><span class="elbow"></span><input type="checkbox" id="n8" checked><svg class="node" viewBox="0 0 16 16"><use href="#part"/></svg><label for="n8">螺杆</label></li>
          <li class="leaf end"><span class="elbow"></span><input type="checkbox" id="n9" checked><svg class="node" viewBox="0 0 16 16"><use href="#part"/></svg><label for="n9">钳座</label></li>
          <li></li><li></li><li></li><li></li><li></li><li></li><li></li><li></li><li></li>
        </ul>
        <div class="hscroll">
          <button class="left" aria-label="向左"></button>
          <span class="thumb"></span>
          <button class="right" aria-label="向右"></button>
        </div>
      </div>
      <div class="splitter"></div>
      <button class="fold">预览<svg viewBox="0 0 12 10"><path d="M1 1l5 7 5-7"/></svg></button>
      <button class="fold">相依性<svg viewBox="0 0 12 10"><path d="M1 1l5 7 5-7"/></svg></button>
    </section>

    <!-- Graphics window -->
    <section class="graphics">
      <svg viewBox="221 147 1127 485" preserveAspectRatio="xMidYMid meet">
        <defs>
          <linearGradient id="rod" gradientUnits="userSpaceOnUse" x1="672" y1="306" x2="684" y2="328"><stop offset="0" stop-color="#a8a8a8"/><stop offset=".35" stop-color="#e6e6e6"/><stop offset=".6" stop-color="#d2d2d2"/><stop offset="1" stop-color="#5c5c5c"/></linearGradient>
          <linearGradient id="rod2" gradientUnits="userSpaceOnUse" x1="775" y1="255" x2="786" y2="277"><stop offset="0" stop-color="#b0b0b0"/><stop offset=".35" stop-color="#e6e6e6"/><stop offset=".6" stop-color="#d2d2d2"/><stop offset="1" stop-color="#5c5c5c"/></linearGradient>
          <radialGradient id="ball" cx=".42" cy=".5" r=".6"><stop offset="0" stop-color="#f6f6f6"/><stop offset=".4" stop-color="#cfcfcf"/><stop offset="1" stop-color="#777"/></radialGradient>
          <linearGradient id="hub"><stop offset="0" stop-color="#666"/><stop offset=".35" stop-color="#7e7e7e"/><stop offset=".75" stop-color="#8a8a8a"/><stop offset="1" stop-color="#707070"/></linearGradient>
          <linearGradient id="shoulder"><stop offset="0" stop-color="#8a8a8a"/><stop offset=".5" stop-color="#bcbcbc"/><stop offset=".7" stop-color="#dedede"/><stop offset="1" stop-color="#8c8c8c"/></linearGradient>
          <linearGradient id="screw"><stop offset="0" stop-color="#666"/><stop offset=".4" stop-color="#777"/><stop offset="1" stop-color="#969696"/></linearGradient>
          <linearGradient id="round" gradientUnits="userSpaceOnUse" x1="776" y1="330" x2="792" y2="350"><stop offset="0" stop-color="#c8c8c8"/><stop offset="1" stop-color="#8a8a8a"/></linearGradient>
          <linearGradient id="fillet" gradientUnits="userSpaceOnUse" x1="795" y1="522" x2="803" y2="532"><stop offset="0" stop-color="#999"/><stop offset=".5" stop-color="#d6d6d6"/><stop offset="1" stop-color="#bebebe"/></linearGradient>
        </defs>
        <g class="model">
          <!-- seat, left foot -->
          <path fill="#c0c0c0" d="M607 509l33-17 30 3v23l-16 0-43-7z"/>
          <path fill="#868686" d="M607 509l4 3v41l-3-1z"/>
          <ellipse fill="#a2a2a2" cx="645" cy="505" rx="24" ry="9"/>
          <path fill="#bcbcbc" d="M623 509q5-9 22-9t22 8q-6 7-22 7t-22-6z"/>
          <ellipse fill="#818181" cx="647" cy="508" rx="13" ry="5"/>
          <!-- seat, top and right side -->
          <path fill="#c2c2c2" d="M662 332l38-20 52 5 44 7-35 19z"/>
          <path fill="url(#round)" d="M796 324q11 2 12 16l-35 19q-1-14-12-16z"/>
          <path fill="#868686" d="M773 359l35-19 3 76 4 98-35 18-5-116z"/>
          <path fill="url(#fillet)" d="M780 532l35-18q1 7 5 8l-35 18q-5-2-5-8z"/>
          <path fill="#c0c0c0" d="M785 540l35-18 52 9-29 16q-5 3-11 1z"/>
          <path fill="#858585" d="M843 547l29-16 1 43-30 15z"/>
          <path fill="url(#hub)" d="M832 548q6 2 11-1v42q-5 2-9 1z"/>
          <ellipse fill="#9c9c9c" cx="831" cy="535" rx="25" ry="8"/>
          <path fill="#bcbcbc" d="M808 539q3-9 23-10 20 1 23 10-4 5-23 5t-23-5z"/>
          <ellipse fill="#7b7b7b" cx="832" cy="538" rx="13" ry="5"/>
          <!-- opening with screw and slide -->
          <path fill="#878787" stroke="none" d="M678 370l75 12v149h-75z"/>
          <path fill="#c4c4c4" d="M679 382l16-8 5 1-14 8z"/>
          <path fill="#dcdcdc" stroke="none" d="M753 384l-7 9 6 1z"/>
          <path fill="#939393" d="M688 441l29-15h32v26z"/>
          <ellipse fill="#777" cx="732" cy="438" rx="15" ry="5"/>
          <path fill="url(#screw)" stroke="none" d="M716 375l31 5v47q-15 4-31-1z"/>
          <path fill="url(#screw)" stroke="none" d="M721 427h28v15q-14 3-28-1z"/>
          <path fill="none" d="M717 426q15 3 31 1"/>
          <path fill="#444" d="M688 440l61 11 2 50-30 29-32-40z"/>
          <path fill="#c2c2c2" stroke="none" d="M707 511l14-8 13 12-13 15z"/>
          <!-- seat, front face -->
          <path fill="#696969" fill-rule="evenodd" d="M656 342q0-10 10-12l15-1 80 14q10 3 12 16l2 57 5 116q1 7 5 8l47 8 1 42-222-37V512l43 6q8 1 8-5l-4-107zM678 370v12h7l2 58 2 50 32 40 30-29-4-108 6 1v-12z"/>
          <ellipse fill="#3f83c0" cx="707" cy="464" rx="3" ry="4"/>
          <ellipse fill="#3f83c0" cx="731" cy="468" rx="3" ry="4"/>
          <!-- collar and neck -->
          <path fill="url(#screw)" stroke="none" d="M714 315h35v12q-17 6-35 0z"/>
          <path fill="none" stroke="#eee" d="M717 321q14 4 28 0"/>
          <path fill="none" d="M714 318q17 8 35 0m-35 4q17 4 35 0"/>
          <!-- handle, far half -->
          <ellipse fill="#d0d0d0" cx="804" cy="253" rx="15" ry="18"/>
          <path fill="none" d="M802 236q13 2 15 17 0 12-7 18"/>
          <ellipse fill="#7c7c7c" cx="796" cy="255" rx="15" ry="17"/>
          <path fill="url(#rod2)" stroke="none" d="M757 267l36-20q9-3 12 8 0 6-3 9l-45 23z"/>
          <path fill="none" d="M793 247q8-3 12 8 0 6-3 9"/>
          <!-- hub -->
          <path fill="url(#hub)" d="M700 274v32q4 10 29 11 27-1 30-11v-32z"/>
          <path fill="none" d="M702 309q10 8 27 8 24 0 30-11"/>
          <path fill="url(#shoulder)" d="M700 275q0-13 29-14 30 1 30 14-4 8-30 8-25 0-29-8z"/>
          <ellipse fill="#b6b6b6" cx="729" cy="269" rx="25" ry="8"/>
          <!-- handle, near half -->
          <path fill="#b4b4b4" d="M708 288q16-2 17 11 0 10-8 10z"/>
          <path fill="url(#rod)" stroke="none" d="M634 327l76-38q10-2 13 10 0 7-4 9l-76 39z"/>
          <path fill="none" d="M706 290q12-5 18 7 1 8-6 12"/>
          <circle fill="url(#ball)" cx="627" cy="344" r="18"/>
          <path fill="url(#rod)" d="M620 327q11-3 18 2 7 7 6 17-2 10-9 14 5-4 4-14-3-15-19-19z"/>
          <circle fill="url(#ball)" stroke="none" cx="623" cy="345" r="16"/>
        </g>
        <!-- view triad -->
        <g class="triad">
          <path fill="#d0d0d0" stroke="#b4b4b4" d="M266 568l9-5 14 3v16l-9 5-14-3zM266 568l14 3 9-5m-9 5v15m-5-22v14l14 4m-14-4l-9 5"/>
          <path fill="none" stroke="#d8a4a4" d="M266 584l14-8m1-5l6 8m0-8l-6 8"/>
          <path fill="none" stroke="#1c7a24" stroke-width="2" d="M264 584v-24"/>
          <path fill="#1c7a24" d="M261 569l2-10 3 10z"/>
          <path fill="none" stroke="#1238d8" stroke-width="2" d="M265 586l22 3"/>
          <path fill="#1238d8" d="M278 585l12 4-12 2z"/>
          <circle cx="264" cy="585" r="4" fill="#aaa" stroke="#888"/>
          <text x="259" y="557" fill="#3a9a42">Y</text>
          <text x="289" y="594" fill="#3458e0">Z</text>
        </g>
      </svg>
    </section>
  </main>

  <!-- Edit feature toolbar -->
  <div class="toolbar-row">
    <div class="toolbar first">
      <button class="tool" aria-label="编辑特征参数"><svg viewBox="0 0 24 24"><path class="bl" d="M11 7l4-3h8v16l-4 3h-8z"/><path class="lb" d="M11 7h8l4-3m-4 3v16"/><path class="rd" d="M4 5.500h6M4 22.500h6M7.500 6v16m-2-13l2-3 2 3m-4 10l2 3 2-3M1 11l4 5m0-5l-4 5"/><path fill="#f8e050" stroke="#8a7010" d="M16 1L9 8h4l-5 8L18 7h-4l5-6z"/></svg></button>
      <button class="tool" aria-label="编辑位置"><svg viewBox="0 0 24 24"><path class="bl" d="M6 11l4-3h10v12l-4 3H6z"/><path class="lb" d="M6 11h10l4-3m-4 3v12"/><path class="rd" d="M6.500 0v8M15.500 2v7M0 2.500h6m-2-2l2 2-2 2m19 2h-7m2-2l-2 2 2 2M9 2l4 5m0-5L9 7"/></svg></button>
      <button class="drop" aria-label="位置选项"></button>
      <button class="tool" aria-label="移动特征"><svg viewBox="0 0 24 24"><path class="gy" d="M3 12V5l4-4h8v11z"/><path class="bl" d="M7 12V6h4v6zM15 1l6 10-6 1z"/><path class="rd" d="M2 19l5-9M1 19.500h12M7 22.500h15M3 15l-1 4 3-1"/></svg></button>
      <button class="drop" aria-label="移动选项"></button>
      <button class="tool" aria-label="特征重排序"><svg viewBox="0 0 24 24"><path fill="#f7c97c" stroke="#d07030" d="M1 1v7l8-7v7z"/><path class="rd" d="M10 6l7 7m-3 0h3v-3"/><path class="gy" d="M7 13l6-3 4 3 5-1v7l-8 4-7-4z"/><path class="bl" d="M14 16l8-4v7l-8 4z"/></svg></button>
      <button class="drop" aria-label="排序选项"></button>
      <button class="tool" aria-label="替换特征"><svg viewBox="0 0 24 24"><path class="bl" d="M1.500 7.500l6-5h15v14l-6 6h-15z"/><path class="lb" d="M1.500 7.500h15l6-5m-6 5v15"/><path fill="#ef9c4a" stroke="#c03818" d="M5 15q2-5 8-6l-1 3-4 3 5-1q-1 5-8 6l1-2z"/></svg></button>
      <button class="drop" aria-label="替换选项"></button>
      <button class="tool" aria-label="编辑草图"><svg viewBox="0 0 24 24"><path class="gy" d="M1 6l9-5 10 3v6l-9 4-10-3z"/><path class="gl" d="M1 6l10 3 9-5m-9 5v5"/><path class="rd" d="M1 17.500h12M1 19.500h12M1 22.500h16"/><use href="#pencil" x="12" y="10" width="12" height="12"/></svg></button>
      <button class="drop" aria-label="草图编辑选项"></button>
      <button class="tool" aria-label="壳单元"><svg viewBox="0 0 24 24"><path class="gy" d="M2 4l7-3 13 2v15l-9 4-11-3z"/><path class="or" d="M2 5l4 1v9l3 1V8l4-1v15L2 19z"/><path class="gl" d="M13 7l9-4m-9 4v15M6 6q5-2 7 1"/></svg></button>
      <button class="drop" aria-label="壳选项"></button>
      <button class="tool" aria-label="文字样式"><svg viewBox="0 0 24 24"><text class="glyph small" x="1" y="9">A</text><text class="glyph it" x="9" y="20">A</text><path fill="none" stroke="#2a36a0" d="M4 22.500h19"/></svg></button>
      <button class="drop" aria-label="文字选项"></button>
      <button class="tool" aria-label="查找文字"><svg viewBox="0 0 24 24"><circle cx="12" cy="8" r="7" fill="#dfe8ea" stroke="#a4a8aa" stroke-width="2"/><path fill="none" stroke="#9a9ea0" stroke-width="3" d="M16 13l6 6"/><path fill="none" stroke="#d8a83c" stroke-width="2" d="M18 14l4 4"/><text class="glyph dk" x="1" y="22">A</text></svg></button>
      <button class="tool" aria-label="替换文字"><svg viewBox="0 0 24 24"><text class="glyph dk small" x="0" y="9">A</text><text class="glyph dk" x="9" y="23">A</text><path fill="none" stroke="#d8682c" stroke-width="2" d="M11 2q5-1 6 6m-3-2l3 3 3-3"/></svg></button>
      <button class="drop more" aria-label="更多"></button>
    </div>
  </div>

  <!-- Assembly and sketch toolbars -->
  <div class="toolbar-row bottom">
    <div class="toolbar first">
      <button class="tool" aria-label="查找组件"><svg viewBox="0 0 24 24"><use href="#cube" x="5" y="8" width="17" height="16"/><path fill="#626870" stroke="#33373c" d="M1 2l4-1 2 2 3-2 5 2v5l-3-1-2-3-4 4-5-2z"/></svg></button>
      <button class="drop" aria-label="查找选项"></button>
      <button class="tool" aria-label="打开组件"><svg viewBox="0 0 24 24"><path fill="none" stroke="#4450c0" d="M2 3l6-3 7 3v8l3-2 5 3v8l-6 4-6-3-9-2z"/><path class="gy" d="M4 5l5-3 4 2v8l4-2 4 3v6l-5 3-6-3-6-2z"/><path class="gl" d="M4 5l4 2 5-3M8 7v12m-4-7l4 2 5-3m-3 4l5 3 6-4m-6 4v5"/></svg></button>
      <button class="tool" aria-label="仅显示"><svg viewBox="0 0 24 24"><path fill="#ededed" stroke="#bbb" d="M1.500 2.500h21v19h-21z"/><path fill="#bdbdbd" d="M1 2h22v3H1z"/><path fill="#fff" stroke="#aaa" d="M7 9l3-1 3 1v4h4l3 2v4l-3 1-3-1-4 1-4-2v-5l1-1z"/></svg></button>
      <button class="tool" aria-label="添加组件"><svg viewBox="0 0 24 24"><use href="#cube" x="1" y="0" width="12" height="12"/><use href="#cube" x="0" y="11" width="12" height="12"/><use href="#cube" x="9" y="12" width="10" height="11"/><path fill="none" stroke="#2f7fe0" stroke-width="2" d="M15 5h8m-4-4v8"/></svg></button>
      <button class="drop" aria-label="添加选项"></button>
      <button class="tool" aria-label="移动组件"><svg viewBox="0 0 24 24"><use href="#cube" x="6" y="6" width="13" height="13"/><path fill="none" stroke="#3a62b0" d="M15 2h7v7m-9-4h6v6M2 14v8h7m-4-6v4h6"/></svg></button>
      <button class="tool" aria-label="镜像装配"><svg viewBox="0 0 24 24"><use href="#mirror"/></svg></button>
      <button class="tool" aria-label="装配约束"><svg viewBox="0 0 24 24"><path fill="#2d9b3c" d="M1 5l6 5-6 5z"/><path fill="#c8322a" d="M2 13l7 4-6 5z"/><path fill="none" stroke="#a03070" d="M18.500 1v8m-5 .5h10M12 22l5-7m0 7l5-7"/></svg></button>
      <span class="sep"></span>
      <button class="tool" aria-label="装配工具"><svg viewBox="0 0 24 24"><path fill="#f6e27a" stroke="#6a6430" d="M11 1h6v7h6v6h-7v3l-6-1V9h1z"/><path fill="none" stroke="#6a6430" d="M11 8h7m-2 0v6"/><path fill="none" stroke="#a08018" stroke-width="4" d="M3 21q1-5 8-7"/><path fill="none" stroke="#f0d850" stroke-width="2" d="M1 18l4 0-1 5m1-4l6-6"/></svg></button>
      <button class="tool" aria-label="阵列组件"><svg viewBox="0 0 24 24"><use href="#cube" x="1" y="0" width="12" height="12"/><use href="#cube" x="1" y="12" width="12" height="12"/><use href="#cube" x="12" y="12" width="12" height="12"/></svg></button>
      <button class="tool" aria-label="装配序列"><svg viewBox="0 0 24 24"><path fill="#fff" stroke="#333" d="M14.500 1.500h6v7h-6zM9.500 8.500h6v6h-6z"/><path fill="#f8f04c" stroke="#d83020" d="M5.500 14.500h6v7h-6z"/></svg></button>
      <span class="sep"></span>
      <button class="tool" aria-label="组件属性"><svg viewBox="0 0 24 24"><path class="gy" d="M2 6l10-5 11 4v13l-9 5-12-4z"/><path class="gl" d="M2 6l12 4 9-5m-9 5v13"/><path fill="#fbe3b4" stroke="#c8742c" d="M1 14l11-2 3 3-2 6H1z"/><path fill="none" stroke="#c8742c" d="M3 16.500h7m-7 2h7"/></svg></button>
      <span class="sep"></span>
      <button class="tool" aria-label="WAVE 链接"><svg viewBox="0 0 24 24"><g fill="none" stroke="#9a9438" stroke-width="3"><ellipse cx="10" cy="7" rx="3" ry="5"/><ellipse cx="14" cy="16" rx="3" ry="5"/></g><g fill="none" stroke="#eee278"><ellipse cx="10" cy="7" rx="3" ry="5"/><ellipse cx="14" cy="16" rx="3" ry="5"/></g></svg></button>
      <button class="tool" aria-label="关联管理"><svg viewBox="0 0 24 24"><path fill="#fff" stroke="#333" d="M8.500 2.500h14v4h-14zM8 4.500H2.500V11m-2-3l2 3 2-3"/><g fill="none" stroke="#9a9438" stroke-width="3"><ellipse cx="16" cy="13" rx="2" ry="3"/><ellipse cx="19" cy="19" rx="2" ry="4"/></g><g fill="none" stroke="#eee278"><ellipse cx="16" cy="13" rx="2" ry="3"/><ellipse cx="19" cy="19" rx="2" ry="4"/></g></svg></button>
      <button class="tool" aria-label="关系浏览器"><svg viewBox="0 0 24 24"><path fill="none" stroke="#555" d="M4 12h5l4-8h3M9 12l4 5"/><path fill="#bcc8f8" stroke="#4858b8" d="M14.500 2.500h8v3h-8zM14.500 8.500h8v3h-8zM.5 10.500h5v3h-5z"/><path fill="#eef1ff" stroke="#32388c" d="M13.500 13.500h10v10h-10z"/><path fill="#2a2f80" d="M17 15h3v2h-3zM17 18h3v4h1v1h-5v-1h1z"/></svg></button>
      <span class="sep"></span>
      <button class="tool narrow" aria-label="间隙分析"><svg viewBox="0 0 24 24"><path class="gy" d="M12 4l5-3 6 2v7l-5 4-6-2z"/><path class="gy" d="M2 12l5-3 6 2v8l-5 4-6-3z"/><path class="gl" d="M12 4l6 2 5-3m-5 3v8M2 12l6 2 5-3m-5 3v9"/><use href="#spot" x="10" y="9" width="4" height="4"/></svg></button>
      <button class="drop" aria-label="间隙选项"></button>
      <button class="drop more" aria-label="更多"></button>
    </div>
    <div class="toolbar">
      <span class="grip"></span>
      <button class="tool" aria-label="创建草图"><svg viewBox="0 0 24 24"><path fill="url(#sheet)" stroke="#3c4a3c" d="M2 1l17 4v18L2 18z"/><path fill="none" stroke="#333" d="M4 5l5 1v5l-5-1zm7 2l6 1v5l-6-1zm-7 6l3 1v4l-3-1zm6 1l7 2v4l-7-2z"/><path fill="none" stroke="#f0e040" stroke-width="2" d="M18 2v11m-5-6h11m-9-4l7 8m0-8l-7 8"/></svg></button>
      <button class="finish" disabled><svg viewBox="0 0 24 24"><path fill="#dedede" stroke="#bbb" d="M.5.5h23v23H.5z"/><path fill="#f6f6f6" stroke="#999" d="M3 4l19 1-3 11-12-1z"/><path fill="none" stroke="#888" stroke-width="3" stroke-dasharray="3 3" d="M5 6h15M6 12h13"/><path fill="none" stroke="#888" stroke-width="3" stroke-dasharray="3 3" d="M8 9h12"/><path class="gl" d="M3 4l6 18"/></svg>完成草图</button>
      <button class="tool" aria-label="轮廓"><svg viewBox="0 0 24 24"><path class="ln" d="M2.500 1v13q1 6 5 6t4-6q0-8 5-8t5 6v8"/><use href="#spot" x="0" y="11" width="4" height="4"/><use href="#spot" x="10" y="11" width="4" height="4"/><use href="#spot" x="19" y="11" width="4" height="4"/></svg></button>
      <button class="tool" aria-label="直线"><svg viewBox="0 0 24 24"><path class="ln" d="M4 20L20 4"/><use href="#spot" x="2" y="18" width="4" height="4"/><use href="#spot" x="18" y="2" width="4" height="4"/></svg></button>
      <button class="tool" aria-label="圆弧"><svg viewBox="0 0 24 24"><path class="ln" d="M3 3q16 0 19 16"/><use href="#spot" x="1" y="1" width="4" height="4"/><use href="#spot" x="15" y="6" width="4" height="4"/><use href="#spot" x="20" y="18" width="4" height="4"/></svg></button>
      <button class="tool" aria-label="圆"><svg viewBox="0 0 24 24"><circle class="ln" cx="12" cy="12" r="10"/></svg></button>
      <button class="tool" aria-label="圆角"><svg class="off" viewBox="0 0 24 24"><path d="M2 2.500h12q7 1 7.500 10V22"/><path stroke-dasharray="1 1" d="M15 2.500h6.500V10"/></svg></button>
      <button class="tool" aria-label="倒角"><svg class="off" viewBox="0 0 24 24"><path d="M1 1.500h11l9.500 10V23"/><path stroke-dasharray="1 1" d="M12 1.500h9.500V11"/></svg></button>
      <button class="tool" aria-label="矩形"><svg viewBox="0 0 24 24"><path class="ln" d="M2.500 5.500h19v13h-19z"/><use href="#spot" x="1" y="4" width="4" height="4"/><use href="#spot" x="20" y="17" width="4" height="4"/></svg></button>
      <button class="tool" aria-label="艺术样条"><svg viewBox="0 0 24 24"><path fill="none" stroke="#888" d="M2 12l5-9 2 6 6 11 7-11"/><path class="rd" d="M3 12q4-6 9 1 4 5 9-2"/><circle cx="2" cy="12" r="2" fill="#999"/><circle cx="7" cy="3" r="2" fill="#999"/><circle cx="15" cy="20" r="2" fill="#999"/><circle cx="22" cy="9" r="2" fill="#999"/><use href="#spot" x="5" y="7" width="4" height="4"/><use href="#spot" x="13" y="12" width="4" height="4"/></svg></button>
      <button class="tool" aria-label="点"><svg viewBox="0 0 24 24"><path class="ln" stroke-width="2" d="M12 3v18M3 12h18"/></svg></button>
      <button class="tool" aria-label="偏置曲线"><svg class="off" viewBox="0 0 24 24"><path d="M2 21V9l6-6h7v5q8 1 7 8-1 5-6 5zM6 18v-8l4-3h2v5q6-1 6 3 0 3-3 3z"/></svg></button>
      <button class="drop" aria-label="曲线选项"></button>
      <span class="sep"></span>
      <button class="tool" aria-label="快速修剪"><svg class="off" viewBox="0 0 24 24"><path d="M5 2l10 20M1 16.500h10"/><path fill="#ddd" d="M13 14l5-7 4 2-5 6z"/><path stroke-dasharray="1 1" d="M12 16.500h10"/></svg></button>
      <button class="tool" aria-label="快速延伸"><svg class="off" viewBox="0 0 24 24"><path d="M5 2l10 20M1 16.500h10"/><path fill="#ddd" d="M12 15l7-11 3 2-7 10z"/></svg></button>
      <button class="tool" aria-label="制作拐角"><svg class="off" viewBox="0 0 24 24"><path d="M1 11.500h13.500V23M9 6l9 9"/><path stroke-dasharray="1 1" d="M14.500 1v10.500H23"/></svg></button>
      <span class="sep"></span>
      <button class="tool" aria-label="快速尺寸"><svg class="off" viewBox="0 0 24 24"><path d="M1.500 7v12M22.500 7v12M2 13.500h20M6 11l-4 2.500L6 16m12-5l4 2.500-4 2.500"/><path fill="#ddd" d="M16 1L9 8h3l-5 11L19 6h-4l4-5z"/></svg></button>
      <button class="drop" aria-label="尺寸选项"></button>
      <span class="sep"></span>
      <button class="tool" aria-label="几何约束"><svg class="off" viewBox="0 0 24 24"><path d="M2 19l8-10M7 19l8-10m2.500 4v9m-6 .5h11"/></svg></button>
      <button class="tool" aria-label="设为对称"><svg class="off" viewBox="0 0 24 24"><path d="M8 3.500H2.500v18H8M16 3.500h5.500v18H16M6.500 1v7m11-7v7M6 4.500h5m7 0h-5"/><path d="M12.500 1v23" stroke-dasharray="4 1"/></svg></button>
      <button class="tool" aria-label="显示约束"><svg class="off" viewBox="0 0 24 24"><path fill="#bbb" d="M1 8l5 5-5 4z"/><path d="M10 12l7-10m-2 11l7-11m-5.500 13v8m-5 .5h11"/></svg></button>
      <button class="drop" aria-label="约束选项"></button>
      <span class="sep"></span>
      <button class="tool" aria-label="转换参考"><svg class="off dark" viewBox="0 0 24 24"><path d="M2.500 1.500h9v9h-9zM9.500 12.500h13v10h-13zM1.500 16.500h6v6h-6zM3 21l3-3"/><path fill="#ddd" d="M12 13l7-9 3 2-7 9z"/></svg></button>
      <button class="tool" aria-label="备选解"><svg class="off" viewBox="0 0 24 24"><path fill="#e8e8e8" d="M1 13l9-3 6 3-6 4-9-1zM2 18l8-2 6 3-6 4z"/><path fill="#ddd" d="M14 15h8v7h-8zm2 0v-3q2-3 4 0v3"/><path d="M2 7q2-6 8-4"/></svg></button>
      <button class="tool" aria-label="创建自动判断约束"><svg class="off" viewBox="0 0 24 24"><path fill="#ddd" d="M1 17l10-4 11 3-9 6-12-2zM8 11h8v6H8zM12 5v6"/></svg></button>
      <button class="drop more" aria-label="更多"></button>
    </div>
  </div>

  <footer class="statusbar">
    <svg viewBox="0 0 16 12"><path fill="#ddd" stroke="#aaa" d="M.5.500h15v11H.5z"/><path fill="none" stroke="#999" d="M2 9l3-6 2 5 3-5 2 5 2-5M4 4h8"/></svg>
    <svg viewBox="0 0 16 12"><path fill="none" stroke="#888" d="M.5 4V.5H4m8 0h3.500V4"/><path fill="#fff" stroke="#444" d="M3.500 3.500h9v9h-9z"/><path fill="#5c94d0" d="M5 6h6v4H5z"/></svg>
  </footer>

  <!-- Input method bar floating over the window -->
  <div class="ime">
    <span class="ime-grip"></span>
    <span class="ime-logo">S</span>
    <span class="ime-help">?</span>
    <span>:</span>
  </div>
</body>

</html>
```

FILE: styles.css
```css
* {
  box-sizing: border-box;
}

body {
  margin: 0;
  height: 100vh;
  display: flex;
  flex-direction: column;
  overflow: hidden;
  background: #fff;
  color: #111;
  font-family: "Open Sans", "Noto Sans CJK SC", sans-serif;
  font-size: 12px;
}

button {
  flex: none;
  margin: 0;
  padding: 0;
  border: none;
  background: none;
  color: inherit;
  font: inherit;
  white-space: nowrap;
}

svg {
  display: block;
  flex: none;
}

.defs {
  position: absolute;
}

/* Title bar */
.titlebar {
  flex: none;
  display: flex;
  align-items: center;
  height: 20px;
  padding-bottom: 6px;
}

.logo {
  width: 33px;
  margin-right: 4px;
  border-right: 1px solid #ccc;
  color: #8aa0b2;
  font-size: 24px;
  font-weight: bold;
  line-height: 20px;
  text-indent: -7px;
}

.title {
  margin: 0;
  font-size: 13px;
  font-weight: normal;
  line-height: 16px;
}

.brand {
  margin-left: auto;
  color: #009999;
  font-size: 13px;
  font-weight: 800;
}

.window-buttons {
  display: flex;
  gap: 11px;
  margin-left: 26px;
  margin-right: -3px;
  color: #555;
}

.window-buttons.dark {
  gap: 7px;
  margin-left: auto;
  color: #111;
}

.win {
  width: 12px;
  height: 12px;
}

.w2 {
  fill: none;
  stroke: currentColor;
  stroke-width: 2;
}

/* Menu bar */
.menubar {
  flex: none;
  display: flex;
  align-items: center;
  gap: 15px;
  height: 27px;
  padding-bottom: 2px;
  background: #c8d6d4;
  font-size: 11px;
}

.menu-icon {
  width: 14px;
  height: 14px;
  margin-right: -8px;
}

.menubar .wide {
  margin-right: 4px;
}

/* Toolbars */
.toolbar-row {
  flex: none;
  display: flex;
  height: 34px;
  overflow: hidden;
}

.toolbar-row.bottom {
  border-bottom: 1px solid #999;
}

.toolbar {
  flex: none;
  display: flex;
  align-items: center;
  border-right: 1px solid #d8d8d8;
  border-bottom: 1px solid #dcdcdc;
}

.toolbar.first {
  margin-left: -2px;
}

.toolbar.aside {
  margin-left: 58px;
}

.tool {
  display: flex;
  align-items: center;
  justify-content: center;
  width: 31px;
  height: 32px;
}

.tool.narrow {
  width: 28px;
}

.tool svg,
.start svg,
.finish svg {
  width: 24px;
  height: 24px;
}

.start {
  display: flex;
  align-items: center;
  gap: 4px;
  width: 54px;
  padding-left: 4px;
  font-size: 11px;
}

.finish {
  display: flex;
  align-items: center;
  gap: 4px;
  width: 79px;
  padding-left: 4px;
  color: #b4b4b4;
  font-size: 11px;
}

.drop {
  display: flex;
  justify-content: center;
  width: 12px;
}

.drop::after {
  content: "";
  border: 3px solid transparent;
  border-top-color: #111;
  border-bottom: none;
}

.drop.more {
  padding-top: 14px;
}

.drop.last {
  margin-left: auto;
  margin-right: -7px;
}

.sep {
  flex: none;
  width: 6px;
  height: 26px;
  background: linear-gradient(#ccc, #ccc) center / 1px 100% no-repeat;
}

.grip {
  flex: none;
  width: 8px;
  height: 26px;
  background: radial-gradient(circle, #999 1px, transparent 1px) center / 4px 4px repeat-y;
}

.finder {
  display: flex;
  align-items: center;
  width: 125px;
  height: 20px;
  margin: 0 6px 0 4px;
  border: 1px solid #888;
}

.finder input {
  flex: 1;
  min-width: 0;
  padding: 0 1px;
  border: none;
  outline: none;
  font: inherit;
  font-size: 11px;
}

.finder svg {
  width: 16px;
  height: 16px;
  margin-right: 1px;
  fill: none;
  stroke: #444;
}

/* Icon paints */
.bl { fill: url(#blue); stroke: #6076c8; }
.blt { fill: #dce5fc; stroke: #6076c8; }
.bld { fill: #7f95de; stroke: #6076c8; }
.or { fill: url(#gold); stroke: #d08838; }
.cr { fill: url(#cream); stroke: #b49c50; }
.gy { fill: url(#gray); stroke: #6c6e70; }
.tl { fill: #3f998c; stroke: #1e5a50; }
.ln { fill: none; stroke: #222; }
.lb { fill: none; stroke: #6076c8; }
.lo { fill: none; stroke: #d08838; }
.gl { fill: none; stroke: #6c6e70; }
.rd { fill: none; stroke: #cc3a3a; }

.off {
  fill: none;
  stroke: #b0b0b0;
}

.off.dark {
  stroke: #999;
}

.abc {
  fill: #222;
  font-family: "Liberation Sans", sans-serif;
  font-size: 6px;
  font-weight: bold;
}

.glyph {
  fill: #2a36a0;
  font-family: "Liberation Serif", serif;
  font-size: 18px;
  font-weight: bold;
}

.glyph.small {
  font-size: 11px;
}

.glyph.it {
  font-style: italic;
}

.glyph.dk {
  fill: #3a3a3a;
}

/* Selection bar */
.selection-bar {
  flex: none;
  display: flex;
  align-items: center;
  height: 32px;
  border-bottom: 1px solid #868c92;
}

.combo {
  position: relative;
  flex: none;
  width: 132px;
  margin-left: -4px;
  margin-right: 8px;
}

.combo.scope {
  width: 140px;
  margin-left: 0;
  margin-right: 3px;
}

.combo select {
  display: block;
  width: 100%;
  height: 20px;
  padding: 0 2px;
  appearance: none;
  border: 1px solid #999;
  border-radius: 0;
  background: #fff;
  color: #111;
  font: inherit;
  font-size: 11px;
}

.combo::after {
  content: "";
  position: absolute;
  top: 8px;
  right: 5px;
  border: 4px solid transparent;
  border-top-color: #111;
  border-bottom: none;
}

.mini {
  display: flex;
  align-items: center;
  justify-content: center;
  width: 23px;
  height: 22px;
}

.mini svg {
  width: 18px;
  height: 18px;
}

.mini.on {
  border: 1px solid #a2c2ba;
  background: #c8d8d4;
}

.selection-bar .sep {
  width: 5px;
}

/* Workspace */
.workspace {
  flex: 1;
  display: flex;
  min-height: 0;
  border-bottom: 1px solid #e4e4e4;
}

.resource-bar {
  flex: none;
  display: flex;
  flex-direction: column;
  width: 23px;
  overflow: hidden;
  border-right: 1px solid #aaa;
  background: #dcdcdc;
}

.tab {
  display: flex;
  align-items: center;
  height: 43px;
}

.tab svg {
  width: 24px;
  height: 24px;
  margin-left: -4px;
}

.tab.gear {
  height: 41px;
  padding-bottom: 14px;
  border-bottom: 1px solid #aaa;
}

.tab.active {
  width: 23px;
  height: 44px;
  background: #fff;
}

.tab.web {
  height: 54px;
}

.tab.role {
  height: 34px;
}

.squiggle {
  width: 22px;
  height: 8px;
}

.scroll {
  height: 16px;
}

.scroll svg {
  width: 12px;
  height: 12px;
}

/* Navigator panel */
.navigator {
  flex: none;
  display: flex;
  flex-direction: column;
  width: 198px;
  padding: 0 9px 4px 6px;
  border-right: 1px solid #868c92;
}

.nav-head {
  flex: none;
  display: flex;
  align-items: center;
  justify-content: space-between;
  height: 28px;
  padding: 0 7px 0 4px;
}

.nav-head h2 {
  margin: 0;
  font-size: 12px;
  font-weight: normal;
}

.maximize {
  width: 12px;
  height: 11px;
  border: 1px solid #111;
  border-top-width: 2px;
}

.tree-frame {
  flex: 1;
  display: flex;
  flex-direction: column;
  min-height: 0;
  padding: 1px;
  border: 1px solid #d4d4d4;
}

.column-head {
  display: flex;
  align-items: center;
  gap: 18px;
  height: 21px;
  padding-left: 6px;
  border-bottom: 1px solid #d4d4d4;
  background: #f0f0f0;
}

.sort {
  border: 5px solid transparent;
  border-top-color: #111;
  border-bottom: none;
}

.tree {
  flex: 1;
  min-height: 0;
  margin: 0;
  padding: 0;
  overflow: hidden;
  list-style: none;
}

.tree li {
  display: flex;
  align-items: center;
  height: 20px;
  padding-left: 5px;
  border-bottom: 1px solid #e8e8e8;
  line-height: 18px;
  white-space: nowrap;
}

.tree li:nth-child(even) {
  background: #fafafa;
}

.tree li.child {
  padding-left: 24px;
}

.tree li.leaf {
  padding-left: 28px;
}

.toggle {
  flex: none;
  width: 9px;
  height: 9px;
  border: 1px solid #c8c8c8;
  background: linear-gradient(#222, #222) center / 5px 1px no-repeat;
}

.toggle.plus {
  background: linear-gradient(#222, #222) center / 5px 1px no-repeat, linear-gradient(#222, #222) center / 1px 5px no-repeat;
}

.dots {
  flex: none;
  width: 4px;
  border-top: 1px dotted #999;
}

.elbow {
  flex: none;
  width: 9px;
  height: 20px;
  border-left: 1px dotted #999;
  background: repeating-linear-gradient(to right, #999 0 1px, transparent 1px 2px) center / 100% 1px no-repeat;
}

.end .elbow {
  height: 10px;
  align-self: flex-start;
  background-position: bottom;
}

.tree input {
  flex: none;
  width: 12px;
  height: 12px;
  margin: 0 1px 0 3px;
  appearance: none;
  border: 1px solid #111;
  background: #fff;
}

.tree input:checked::before {
  content: "";
  display: block;
  width: 10px;
  height: 10px;
  background: #d81e1e;
  clip-path: polygon(0 45%, 22% 38%, 40% 60%, 85% 0, 100% 8%, 45% 100%, 30% 100%);
}

.node {
  width: 16px;
  height: 16px;
  margin-right: 4px;
}

.leaf .node {
  width: 15px;
  height: 15px;
  margin: 0 3px 0 2px;
}

.node.folder {
  margin-right: 1px;
}

.focused {
  flex: 1;
  padding-left: 2px;
  border: 1px dotted #111;
  border-right: none;
}

.bold {
  font-weight: bold;
}

.hscroll {
  flex: none;
  display: flex;
  align-items: center;
  height: 16px;
  background: #ececec;
}

.hscroll button {
  border: 3px solid transparent;
}

.hscroll .left {
  margin: 0 8px 0 3px;
  border-right: 4px solid #222;
}

.hscroll .right {
  margin-left: auto;
  margin-right: 4px;
  border-left: 4px solid #222;
}

.thumb {
  width: 45px;
  height: 15px;
  border: 1px solid #999;
  border-radius: 1px;
  background: repeating-linear-gradient(to right, #555 0 1px, transparent 1px 3px) center / 8px 7px no-repeat, linear-gradient(#f6f6f6, #cfcfcf);
}

.splitter {
  flex: none;
  height: 5px;
  border: 1px solid #bbb;
  background: #d4d4d4;
}

.fold {
  display: flex;
  align-items: center;
  justify-content: space-between;
  height: 24px;
  padding: 2px 5px 0 7px;
  border-bottom: 2px solid #d0d0d0;
  color: #2a80b0;
  font-size: 14px;
  line-height: 20px;
}

.fold svg {
  width: 12px;
  height: 10px;
  margin-bottom: 3px;
  fill: none;
  stroke: #2a80b0;
  stroke-width: 2;
}

/* Graphics window */
.graphics {
  flex: 1;
  min-width: 0;
  background: linear-gradient(#b6b7b9, #e5e6e8 75%, #e8e9eb);
}

.graphics svg {
  width: 100%;
  height: 100%;
}

.model {
  stroke: #2c2c2c;
  stroke-width: 1;
  stroke-linejoin: round;
}

.triad text {
  font-size: 12px;
}

/* Status bar */
.statusbar {
  flex: none;
  display: flex;
  justify-content: flex-end;
  gap: 4px;
  height: 12px;
  padding: 3px 46px 0 0;
  border-top: 1px solid #ddd;
}

.statusbar svg {
  width: 16px;
  height: 12px;
}

/* Input method bar */
.ime {
  position: absolute;
  right: 0;
  bottom: 30px;
  display: flex;
  align-items: center;
  gap: 7px;
  width: 70px;
  height: 26px;
  padding-left: 4px;
  overflow: hidden;
  background: linear-gradient(#111 0 1px, #999 1px, #222 45%, #111);
  color: #fff;
  font-weight: bold;
}

.ime-grip {
  flex: none;
  width: 8px;
  height: 17px;
  background: radial-gradient(circle, #000 1px, transparent 1px) 0 0 / 3px 4px;
}

.ime-logo {
  flex: none;
  width: 15px;
  height: 15px;
  border-radius: 4px;
  background: #f4511e;
  line-height: 15px;
  text-align: center;
}

.ime-help {
  flex: none;
  width: 15px;
  height: 15px;
  border: 1px solid #dde;
  border-radius: 50%;
  background: #1020a0;
  font-size: 11px;
  line-height: 13px;
  text-align: center;
}
```
